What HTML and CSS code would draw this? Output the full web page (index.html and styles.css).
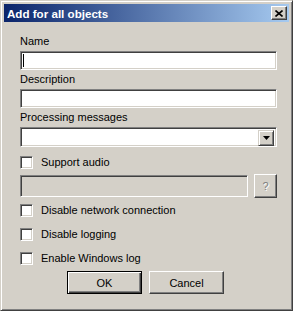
FILE: index.html
```html
<!DOCTYPE html>
<html lang="en">
<head>
  <meta charset="utf-8" />
  <title>Add for all objects</title>
  <link rel="stylesheet" href="styles.css">
</head>
<body>
  <div class="window">
    <div class="titlebar">
      <span class="title">Add for all objects</span>
      <button class="close" type="button">
        <svg width="8" height="7" viewBox="0 0 8 7"><path d="M0.5 0.5 L7.5 6.5 M7.5 0.5 L0.5 6.5" stroke="#000" stroke-width="1.6" fill="none"/></svg>
      </button>
    </div>

    <div class="content">
      <div class="field">
        <label class="label">Name</label>
        <div class="edit"><span class="caret"></span></div>
      </div>
      <div class="field">
        <label class="label">Description</label>
        <div class="edit"></div>
      </div>
      <div class="field">
        <label class="label">Processing messages</label>
        <div class="edit combo">
          <span class="drop">
            <svg width="7" height="4" viewBox="0 0 7 4"><path d="M0 0 H7 L3.5 4 Z" fill="#000"/></svg>
          </span>
        </div>
      </div>

      <div class="check-row first"><span class="check"></span>Support audio</div>

      <div class="path-row">
        <div class="edit disabled"></div>
        <button class="btn small" type="button" disabled><span class="grey">?</span></button>
      </div>

      <div class="check-row"><span class="check"></span>Disable network connection</div>
      <div class="check-row"><span class="check"></span>Disable logging</div>
      <div class="check-row"><span class="check"></span>Enable Windows log</div>

      <div class="actions">
        <button class="btn default" type="button">OK</button>
        <button class="btn" type="button">Cancel</button>
      </div>
    </div>
  </div>
</body>
</html>
```

FILE: styles.css
```css
:root {
  --face: #d4d0c8;
  --shadow: #808080;
  --dark: #404040;
  --light: #ffffff;
}

* { box-sizing: border-box; margin: 0; padding: 0; }

body {
  font-family: "Liberation Sans", Arial, sans-serif;
  font-size: 11px;
  color: #000;
  background: #fff;
}

.window {
  width: 293px;
  height: 311px;
  background: var(--face);
  border: 1px solid;
  border-color: var(--face) var(--dark) var(--dark) var(--face);
  box-shadow: inset 1px 1px var(--light), inset -1px -1px var(--shadow);
  padding: 3px;
}

.titlebar {
  height: 18px;
  display: flex;
  align-items: center;
  justify-content: space-between;
  padding: 0 2px 0 3px;
  background: linear-gradient(to right, #0a246a, #a6caf0);
}

.title {
  color: #fff;
  font-weight: bold;
  font-size: 11.6px;
}

.close {
  width: 16px;
  height: 14px;
  display: flex;
  align-items: center;
  justify-content: center;
  background: var(--face);
  border: 1px solid;
  border-color: var(--light) var(--dark) var(--dark) var(--light);
  box-shadow: inset -1px -1px var(--shadow);
}

.content {
  padding: 13px 12px 0 16px;
}

.field + .field { margin-top: 3px; }

.label {
  display: block;
  line-height: 13px;
  margin-bottom: 3px;
}

.edit {
  position: relative;
  height: 19px;
  background: #fff;
  border: 1px solid;
  border-color: var(--shadow) var(--light) var(--light) var(--shadow);
  box-shadow: inset 1px 1px var(--dark), inset -1px -1px var(--face);
}

.caret {
  position: absolute;
  left: 2px;
  top: 2px;
  width: 1px;
  height: 13px;
  background: #000;
}

.combo {
  height: 20px;
  display: flex;
  justify-content: flex-end;
  padding: 2px;
  margin-top: 2px;
}

.drop {
  width: 16px;
  height: 16px;
  display: flex;
  align-items: center;
  justify-content: center;
  background: var(--face);
  border: 1px solid;
  border-color: var(--face) var(--dark) var(--dark) var(--face);
  box-shadow: inset 1px 1px var(--light), inset -1px -1px var(--shadow);
}

.check-row {
  height: 24px;
  display: flex;
  align-items: center;
  gap: 8px;
}

.check-row.first { margin-top: 3px; }

.check {
  width: 13px;
  height: 13px;
  background: #fff;
  border: 1px solid;
  border-color: var(--shadow) var(--light) var(--light) var(--shadow);
  box-shadow: inset 1px 1px var(--dark), inset -1px -1px var(--face);
}

.path-row {
  height: 24px;
  display: flex;
  align-items: center;
  gap: 6px;
}

.path-row .edit {
  flex: 1;
  height: 22px;
}

.edit.disabled { background: var(--face); }

.btn {
  font-family: inherit;
  font-size: 11px;
  color: #000;
  width: 75px;
  height: 23px;
  background: var(--face);
  border: 1px solid;
  border-color: var(--light) var(--dark) var(--dark) var(--light);
  box-shadow: inset -1px -1px var(--shadow);
}

.btn.small {
  width: 23px;
  height: 24px;
}

.grey {
  color: var(--shadow);
  text-shadow: 1px 1px var(--light);
}

.btn.default {
  border: 1px solid #000;
  box-shadow: inset 1px 1px var(--light), inset -1px -1px var(--dark), inset -2px -2px var(--shadow);
}

.actions {
  display: flex;
  gap: 7px;
  padding-left: 47px;
  margin-top: 1px;
}
```
